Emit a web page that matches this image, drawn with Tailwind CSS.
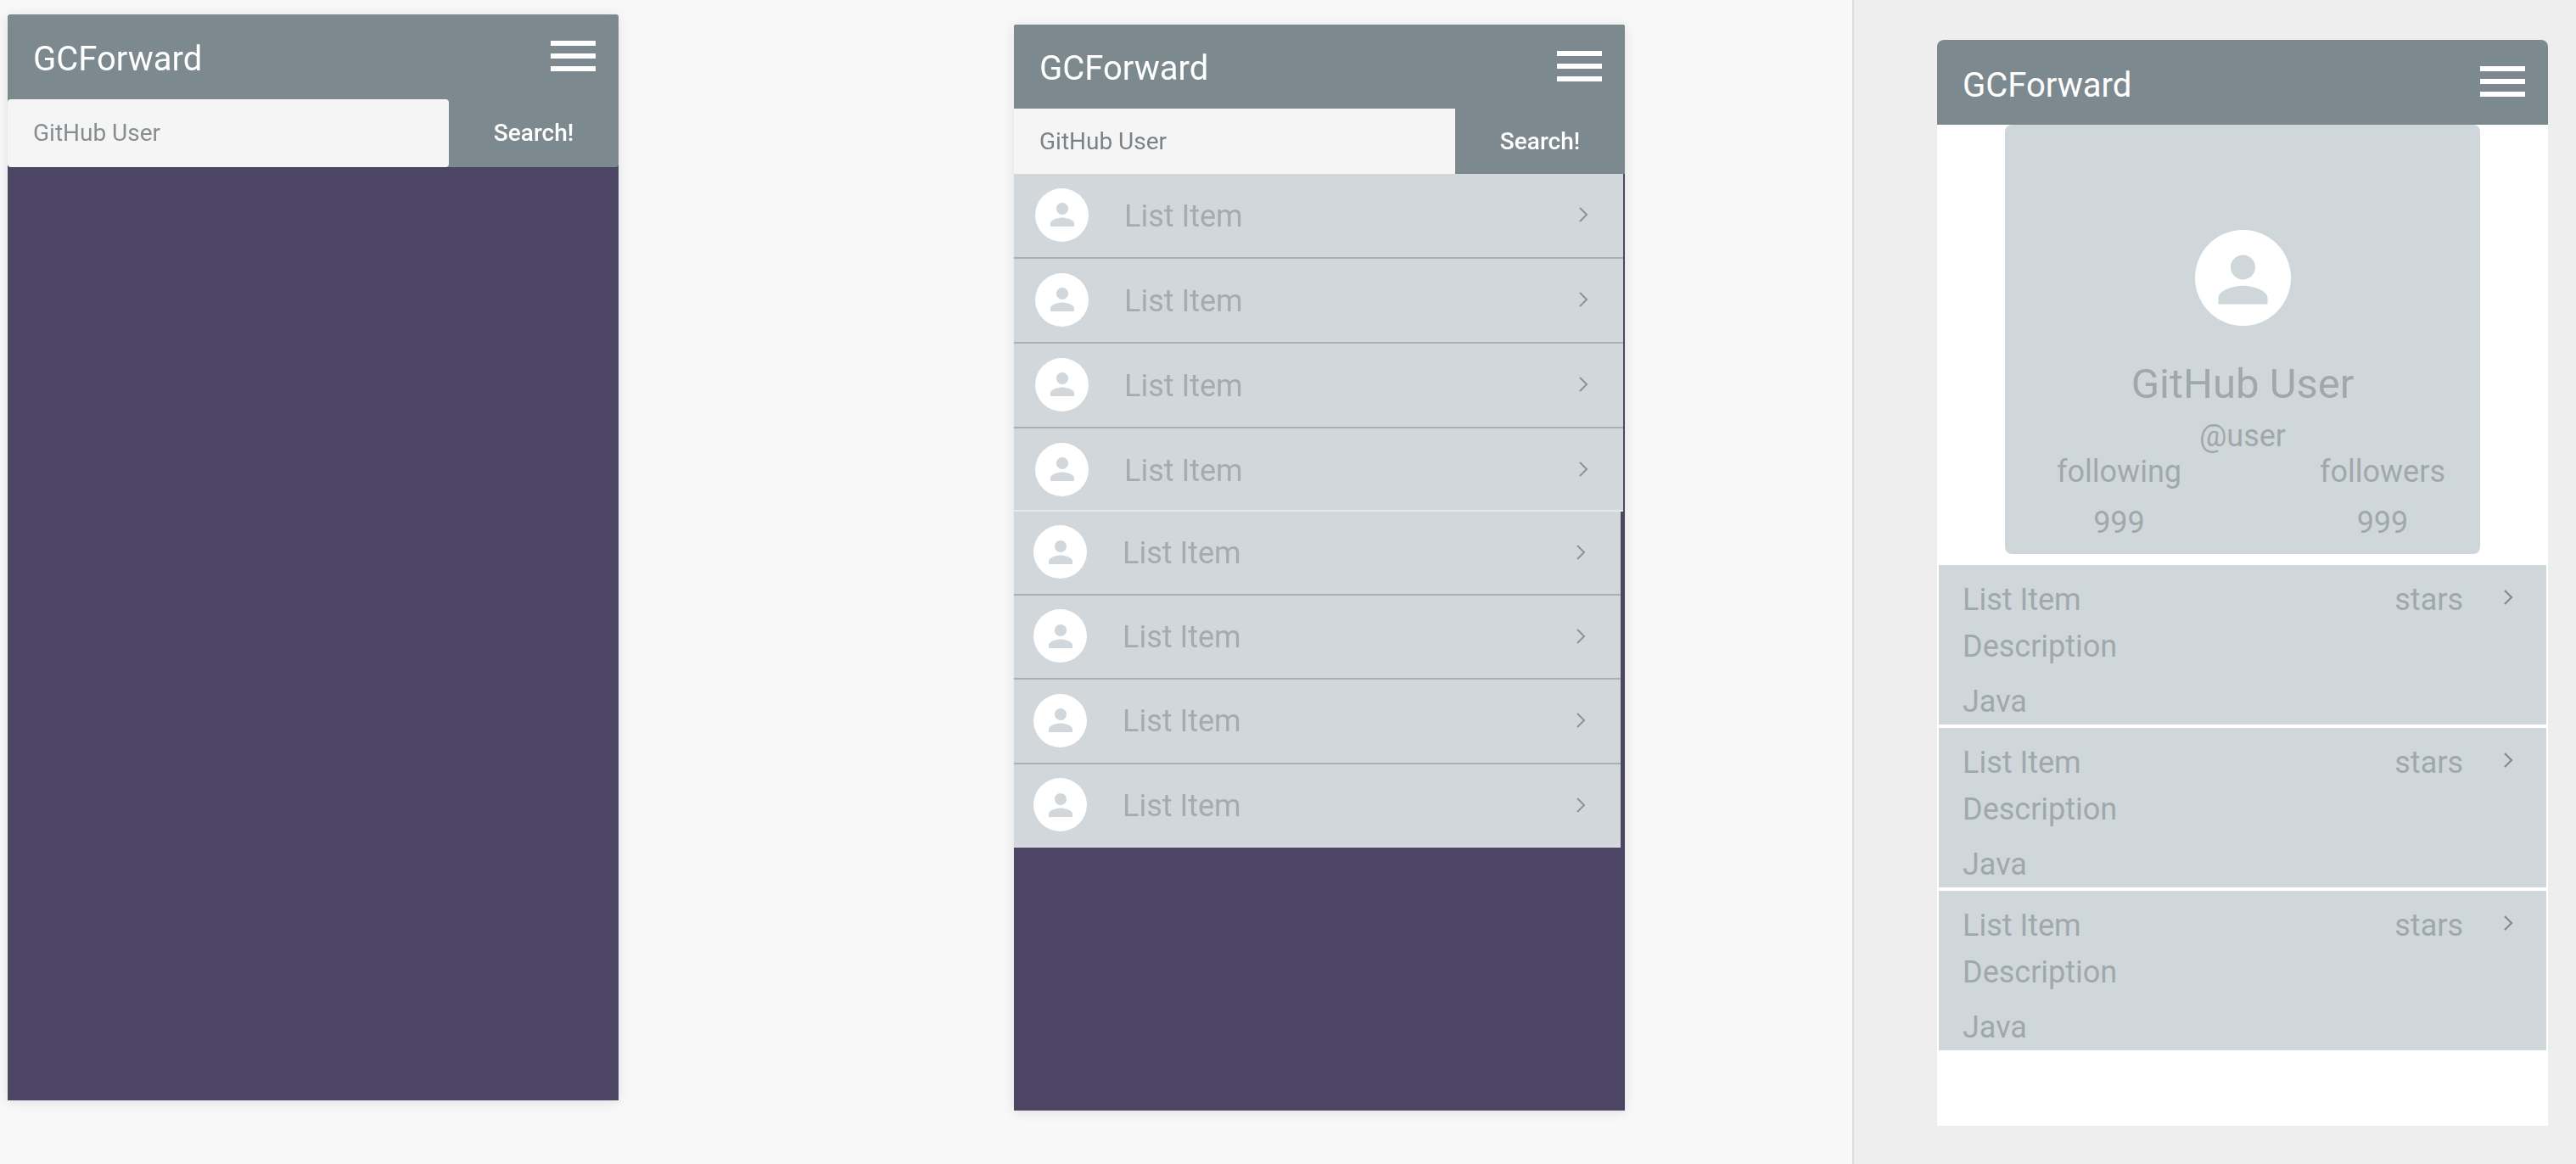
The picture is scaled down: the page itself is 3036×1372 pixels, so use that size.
<!doctype html>
<html lang="en">
<head>
  <meta charset="UTF-8">
  <script src="https://cdn.jsdelivr.net/npm/@tailwindcss/browser@4"></script>
  <title>GCForward</title>
</head>
<body class="font-['Roboto',sans-serif]">

<div class="flex w-[3036px] h-[1372px] overflow-hidden">

  <!-- mockups on the left -->
  <div class="flex w-[2183px] shrink-0 items-start bg-[#f8f8f8]">

    <!-- empty search -->
    <div class="ml-[9px] mt-[17px] w-[720px] h-[1280px] flex flex-col bg-[#4c4563] rounded-t-[4px] shadow-[0_2px_14px_rgba(0,0,0,0.1)] blur-[0.6px]">
      <div class="h-[100px] shrink-0 flex items-center justify-between pl-[30px] pr-[27px] bg-[#7c8a90] rounded-t-[4px]">
        <span class="pt-1 text-[40px] leading-[47px] text-white">GCForward</span>
        <div class="flex flex-col gap-[9px] w-[53px] -mt-0.5">
          <div class="h-[6px] bg-white"></div>
          <div class="h-[6px] bg-white"></div>
          <div class="h-[6px] bg-white"></div>
        </div>
      </div>
      <div class="h-[80px] shrink-0 flex bg-[#7c8a90] rounded-b-[4px]">
        <div class="w-[520px] flex items-center pl-[30px] bg-[#f5f5f5] rounded-[4px] text-[28px] text-[#868e92]">GitHub User</div>
        <div class="flex-1 flex items-center justify-center text-[28px] font-medium text-white">Search!</div>
      </div>
    </div>

    <!-- search results -->
    <div class="ml-[466px] mt-[29px] w-[720px] h-[1280px] flex flex-col bg-[#4c4563] rounded-t-[3px] shadow-[0_2px_14px_rgba(0,0,0,0.1)] blur-[0.6px]">
      <div class="h-[99px] shrink-0 flex items-center justify-between pl-[30px] pr-[27px] bg-[#7c8a90] rounded-t-[3px]">
        <span class="pt-1 text-[40px] leading-[47px] text-white">GCForward</span>
        <div class="flex flex-col gap-[9px] w-[53px] -mt-0.5">
          <div class="h-[6px] bg-white"></div>
          <div class="h-[6px] bg-white"></div>
          <div class="h-[6px] bg-white"></div>
        </div>
      </div>
      <div class="h-[77px] shrink-0 flex bg-[#7c8a90]">
        <div class="w-[520px] flex items-center pl-[30px] bg-[#f5f5f5] text-[28px] text-[#7a8286]">GitHub User</div>
        <div class="flex-1 flex items-center justify-center text-[28px] font-medium text-white">Search!</div>
      </div>

      <div class="w-[718px] flex flex-col">
        <div class="h-[100px] flex items-center pl-[25px] pr-[41px] pb-[2px] bg-[#d1d7db] border-b-2 border-[#a9b0b6]">
          <div class="w-[63px] h-[63px] rounded-full bg-white flex items-center justify-center"><svg viewBox="0 0 24 24" class="w-[42px] h-[42px] fill-[#d1d7db]"><path d="M12 12c2.21 0 4-1.79 4-4s-1.79-4-4-4-4 1.79-4 4 1.79 4 4 4zm0 2c-2.67 0-8 1.34-8 4v2h16v-2c0-2.66-5.33-4-8-4z"/></svg></div>
          <span class="ml-[42px] mt-[3px] flex-1 text-[36px] text-[#a4abb1]">List Item</span>
          <svg viewBox="0 0 12 18" class="w-[12px] h-[18px] fill-none stroke-[#8c9499] stroke-2"><polyline points="2,1 10,9 2,17"/></svg>
        </div>
        <div class="h-[100px] flex items-center pl-[25px] pr-[41px] pb-[2px] bg-[#d1d7db] border-b-2 border-[#a9b0b6]">
          <div class="w-[63px] h-[63px] rounded-full bg-white flex items-center justify-center"><svg viewBox="0 0 24 24" class="w-[42px] h-[42px] fill-[#d1d7db]"><path d="M12 12c2.21 0 4-1.79 4-4s-1.79-4-4-4-4 1.79-4 4 1.79 4 4 4zm0 2c-2.67 0-8 1.34-8 4v2h16v-2c0-2.66-5.33-4-8-4z"/></svg></div>
          <span class="ml-[42px] mt-[3px] flex-1 text-[36px] text-[#a4abb1]">List Item</span>
          <svg viewBox="0 0 12 18" class="w-[12px] h-[18px] fill-none stroke-[#8c9499] stroke-2"><polyline points="2,1 10,9 2,17"/></svg>
        </div>
        <div class="h-[100px] flex items-center pl-[25px] pr-[41px] pb-[2px] bg-[#d1d7db] border-b-2 border-[#a9b0b6]">
          <div class="w-[63px] h-[63px] rounded-full bg-white flex items-center justify-center"><svg viewBox="0 0 24 24" class="w-[42px] h-[42px] fill-[#d1d7db]"><path d="M12 12c2.21 0 4-1.79 4-4s-1.79-4-4-4-4 1.79-4 4 1.79 4 4 4zm0 2c-2.67 0-8 1.34-8 4v2h16v-2c0-2.66-5.33-4-8-4z"/></svg></div>
          <span class="ml-[42px] mt-[3px] flex-1 text-[36px] text-[#a4abb1]">List Item</span>
          <svg viewBox="0 0 12 18" class="w-[12px] h-[18px] fill-none stroke-[#8c9499] stroke-2"><polyline points="2,1 10,9 2,17"/></svg>
        </div>
        <div class="h-[98px] flex items-center pl-[25px] pr-[41px] bg-[#d1d7db] border-b-2 border-[#e4e8ec]">
          <div class="w-[63px] h-[63px] rounded-full bg-white flex items-center justify-center"><svg viewBox="0 0 24 24" class="w-[42px] h-[42px] fill-[#d1d7db]"><path d="M12 12c2.21 0 4-1.79 4-4s-1.79-4-4-4-4 1.79-4 4 1.79 4 4 4zm0 2c-2.67 0-8 1.34-8 4v2h16v-2c0-2.66-5.33-4-8-4z"/></svg></div>
          <span class="ml-[42px] mt-[3px] flex-1 text-[36px] text-[#a4abb1]">List Item</span>
          <svg viewBox="0 0 12 18" class="w-[12px] h-[18px] fill-none stroke-[#8c9499] stroke-2"><polyline points="2,1 10,9 2,17"/></svg>
        </div>
      </div>

      <div class="w-[715px] flex flex-col">
        <div class="h-[99px] flex items-center pl-[23px] pr-[41px] pb-[2px] bg-[#d1d7db] border-b-2 border-[#a9b0b6]">
          <div class="w-[63px] h-[63px] rounded-full bg-white flex items-center justify-center"><svg viewBox="0 0 24 24" class="w-[42px] h-[42px] fill-[#d1d7db]"><path d="M12 12c2.21 0 4-1.79 4-4s-1.79-4-4-4-4 1.79-4 4 1.79 4 4 4zm0 2c-2.67 0-8 1.34-8 4v2h16v-2c0-2.66-5.33-4-8-4z"/></svg></div>
          <span class="ml-[42px] mt-[2px] flex-1 text-[36px] text-[#a4abb1]">List Item</span>
          <svg viewBox="0 0 12 18" class="w-[12px] h-[18px] fill-none stroke-[#8c9499] stroke-2"><polyline points="2,1 10,9 2,17"/></svg>
        </div>
        <div class="h-[99px] flex items-center pl-[23px] pr-[41px] pb-[2px] bg-[#d1d7db] border-b-2 border-[#a9b0b6]">
          <div class="w-[63px] h-[63px] rounded-full bg-white flex items-center justify-center"><svg viewBox="0 0 24 24" class="w-[42px] h-[42px] fill-[#d1d7db]"><path d="M12 12c2.21 0 4-1.79 4-4s-1.79-4-4-4-4 1.79-4 4 1.79 4 4 4zm0 2c-2.67 0-8 1.34-8 4v2h16v-2c0-2.66-5.33-4-8-4z"/></svg></div>
          <span class="ml-[42px] mt-[2px] flex-1 text-[36px] text-[#a4abb1]">List Item</span>
          <svg viewBox="0 0 12 18" class="w-[12px] h-[18px] fill-none stroke-[#8c9499] stroke-2"><polyline points="2,1 10,9 2,17"/></svg>
        </div>
        <div class="h-[100px] flex items-center pl-[23px] pr-[41px] pb-[2px] bg-[#d1d7db] border-b-2 border-[#a9b0b6]">
          <div class="w-[63px] h-[63px] rounded-full bg-white flex items-center justify-center"><svg viewBox="0 0 24 24" class="w-[42px] h-[42px] fill-[#d1d7db]"><path d="M12 12c2.21 0 4-1.79 4-4s-1.79-4-4-4-4 1.79-4 4 1.79 4 4 4zm0 2c-2.67 0-8 1.34-8 4v2h16v-2c0-2.66-5.33-4-8-4z"/></svg></div>
          <span class="ml-[42px] mt-[2px] flex-1 text-[36px] text-[#a4abb1]">List Item</span>
          <svg viewBox="0 0 12 18" class="w-[12px] h-[18px] fill-none stroke-[#8c9499] stroke-2"><polyline points="2,1 10,9 2,17"/></svg>
        </div>
        <div class="h-[98px] flex items-center pl-[23px] pr-[41px] pb-[2px] bg-[#d1d7db] border-b border-[#e4e8ec]">
          <div class="w-[63px] h-[63px] rounded-full bg-white flex items-center justify-center"><svg viewBox="0 0 24 24" class="w-[42px] h-[42px] fill-[#d1d7db]"><path d="M12 12c2.21 0 4-1.79 4-4s-1.79-4-4-4-4 1.79-4 4 1.79 4 4 4zm0 2c-2.67 0-8 1.34-8 4v2h16v-2c0-2.66-5.33-4-8-4z"/></svg></div>
          <span class="ml-[42px] mt-[2px] flex-1 text-[36px] text-[#a4abb1]">List Item</span>
          <svg viewBox="0 0 12 18" class="w-[12px] h-[18px] fill-none stroke-[#8c9499] stroke-2"><polyline points="2,1 10,9 2,17"/></svg>
        </div>
      </div>
    </div>
  </div>

  <!-- profile preview -->
  <div class="flex-1 flex items-start bg-[#eeeeee] border-l-2 border-[#dcdcdc]">
    <div class="ml-[98px] mt-[47px] w-[720px] h-[1280px] flex flex-col bg-white rounded-t-lg">
      <div class="h-[100px] shrink-0 flex items-center justify-between pl-[30px] pr-[27px] bg-[#7c8a90] rounded-t-lg">
        <span class="pt-1.5 text-[40px] leading-[47px] text-white">GCForward</span>
        <div class="flex flex-col gap-[9px] w-[53px] -mt-0.5">
          <div class="h-[6px] bg-white"></div>
          <div class="h-[6px] bg-white"></div>
          <div class="h-[6px] bg-white"></div>
        </div>
      </div>

      <div class="mx-auto w-[560px] h-[506px] shrink-0 flex flex-col items-center pt-[124px] bg-[#d0d7da] rounded-lg">
        <div class="w-[113px] h-[113px] rounded-full bg-white flex items-center justify-center"><svg viewBox="0 0 24 24" class="w-[87px] h-[87px] mt-1 fill-[#d0d7da]"><path d="M12 12c2.21 0 4-1.79 4-4s-1.79-4-4-4-4 1.79-4 4 1.79 4 4 4zm0 2c-2.67 0-8 1.34-8 4v2h16v-2c0-2.66-5.33-4-8-4z"/></svg></div>
        <div class="mt-[41px] text-[49px] leading-[56px] text-[#a0a8ac]">GitHub User</div>
        <div class="mt-3 text-[36px] leading-[42px] text-[#a0a8ac]">@user</div>
        <div class="w-full flex justify-between pl-[61px] pr-[41px] text-[36px] leading-[42px] text-[#a0a8ac]">
          <div class="flex flex-col items-center">
            <span>following</span>
            <span class="mt-[18px]">999</span>
          </div>
          <div class="flex flex-col items-center">
            <span>followers</span>
            <span class="mt-[18px]">999</span>
          </div>
        </div>
      </div>

      <div class="mt-[13px] mx-[2px] flex flex-col gap-[4px]">
        <div class="h-[188px] flex pl-[28px] pr-[39px] pt-[15px] bg-[#d0d7da] text-[36px] leading-[52px] text-[#a0a8ac]">
          <div class="flex-1 flex flex-col">
            <span>List Item</span>
            <span class="mt-[3px]">Description</span>
            <span class="mt-[13px]">Java</span>
          </div>
          <span>stars</span>
          <svg viewBox="0 0 12 18" class="ml-[47px] mt-[14px] w-[12px] h-[18px] fill-none stroke-[#80888c] stroke-2"><polyline points="2,1 10,9 2,17"/></svg>
        </div>
        <div class="h-[188px] flex pl-[28px] pr-[39px] pt-[15px] bg-[#d0d7da] text-[36px] leading-[52px] text-[#a0a8ac]">
          <div class="flex-1 flex flex-col">
            <span>List Item</span>
            <span class="mt-[3px]">Description</span>
            <span class="mt-[13px]">Java</span>
          </div>
          <span>stars</span>
          <svg viewBox="0 0 12 18" class="ml-[47px] mt-[14px] w-[12px] h-[18px] fill-none stroke-[#80888c] stroke-2"><polyline points="2,1 10,9 2,17"/></svg>
        </div>
        <div class="h-[188px] flex pl-[28px] pr-[39px] pt-[15px] bg-[#d0d7da] text-[36px] leading-[52px] text-[#a0a8ac]">
          <div class="flex-1 flex flex-col">
            <span>List Item</span>
            <span class="mt-[3px]">Description</span>
            <span class="mt-[13px]">Java</span>
          </div>
          <span>stars</span>
          <svg viewBox="0 0 12 18" class="ml-[47px] mt-[14px] w-[12px] h-[18px] fill-none stroke-[#80888c] stroke-2"><polyline points="2,1 10,9 2,17"/></svg>
        </div>
      </div>
    </div>
  </div>
</div>

</body>
</html>
